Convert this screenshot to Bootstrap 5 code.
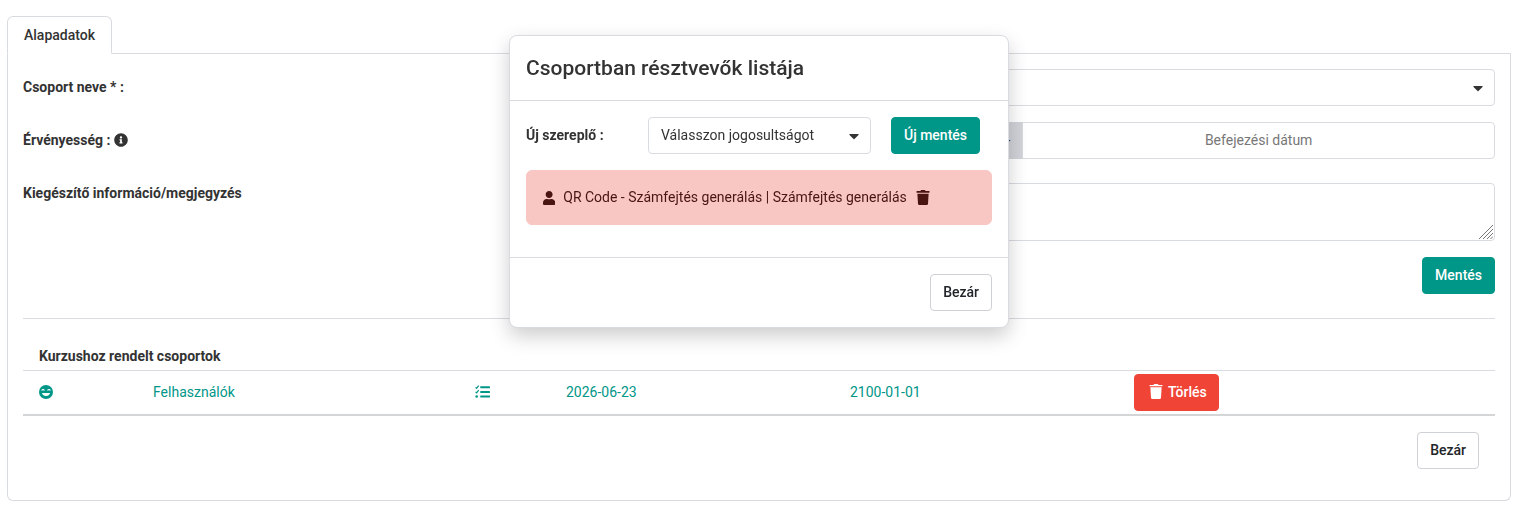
<!DOCTYPE html>
<html lang="hu">
<head>
<meta charset="utf-8">
<title>Csoport</title>
<link href="https://cdn.jsdelivr.net/npm/bootstrap@5.3.0/dist/css/bootstrap.min.css" rel="stylesheet">
<style>
:root { --line: #d8dce1; --teal: #009688; --ink: #333; }
html, body { height: 516px; overflow: hidden; }
body { font-family: Roboto, "Liberation Sans", sans-serif; font-size: 14px; color: var(--ink); background: #fff; }
.page-wrap { padding: 16px 6px 0 7px; }
.nav-tabs { --bs-nav-tabs-border-color: var(--line); --bs-nav-tabs-link-active-border-color: var(--line) var(--line) #fff; --bs-nav-tabs-border-radius: 6px; }
.nav-tabs .nav-link { padding: 8px 16px 7px; font-size: 14px; font-weight: 500; line-height: 21px; color: var(--ink); }
.nav-tabs .nav-link.active { color: var(--ink); }
.tab-box { border: 1px solid var(--line); border-top: 0; border-radius: 0 0 6px 6px; padding: 15px 15px 31px; height: 447px; }
.field-label { font-weight: 700; padding-top: 8px; padding-bottom: 8px; font-size: 14px; line-height: 21px; }
.form-control, .form-select, .input-group-text, .btn { font-size: 14px; line-height: 21px; padding-top: 7px; padding-bottom: 7px; border-radius: 4px; }
.form-control, .form-select { border-color: var(--line); color: var(--ink); }
.form-control::placeholder { color: #777; }
.form-select {
  padding-right: 36px;
  background-image: url("data:image/svg+xml,%3Csvg xmlns='http://www.w3.org/2000/svg' viewBox='0 0 320 512'%3E%3Cpath fill='%23333' d='M31 192h258c18 0 27 22 14 34L174 355c-8 8-20 8-28 0L17 226c-13-12-4-34 14-34z'/%3E%3C/svg%3E");
  background-size: 10px 16px;
  background-position: right 11px center;
}
.input-group-text { background: #d1d3d9; border-color: #d1d3d9; color: var(--ink); }
.note-area {
  height: 58px;
  resize: none;
  background-image: url("data:image/svg+xml,%3Csvg xmlns='http://www.w3.org/2000/svg' viewBox='0 0 14 14'%3E%3Cpath d='M0 14L14 0M4 14L14 4M8 14l6-6M11.500 14l2.500-2.500' stroke='%23777' stroke-width='1' fill='none'/%3E%3C/svg%3E");
  background-repeat: no-repeat;
  background-size: 14px 14px;
  background-position: right 1px bottom 1px;
}
.btn-teal { background: var(--teal); border-color: var(--teal); color: #fff; font-weight: 500; }
.btn-teal:hover { background: #00897b; border-color: #00897b; color: #fff; }
.btn-close-soft { background: #fff; border: 1px solid #ced1d6; color: #212529; font-weight: 500; }
.btn-red { background: #ef4436; border-color: #ef4436; color: #fff; font-weight: 500; padding-left: 14px; padding-right: 11px; vertical-align: middle; }
.btn-red:hover { background: #e53935; border-color: #e53935; color: #fff; }
.btn-red .ico { margin-right: 5px; }
.sep { margin: 24px 0; border-top: 1px solid var(--line); opacity: 1; }
.group-table { table-layout: fixed; width: 100%; margin: 0; --bs-table-color: var(--teal); --bs-table-border-color: var(--line); }
.group-table th { padding: 3px 16px 3px; font-weight: 700; color: var(--ink); border-bottom: 1px solid var(--line); line-height: 21px; }
.group-table td { padding: 3px 16px; color: var(--teal); vertical-align: middle; border-bottom: 2px solid #d4d5d7; height: 43px; line-height: 21px; }
.c1 { width: 114px; } .c2 { width: 322px; } .c3 { width: 91px; } .c4 { width: 284px; }
.group-table td.first-cell { padding-right: 0; }
.ico { display: inline-block; vertical-align: -2px; fill: currentColor; }
.modal-dialog { margin: 35px auto 0 509px; }
.modal-content { --bs-modal-border-color: var(--line); border: 1px solid var(--line); border-radius: 8px; box-shadow: 0 8px 20px rgba(0,0,0,.2); color: var(--ink); }
.modal-header { padding: 16px; border-bottom: 1px solid var(--line); border-radius: 0; height: 65px; }
.modal-title { font-size: 21px; font-weight: 500; line-height: 32px; color: var(--ink); }
.modal-body { padding: 16px; }
.modal-footer { padding: 16px; border-top: 1px solid var(--line); }
.modal-footer > .btn { margin: 0; }
.actor-label { width: 122px; font-weight: 700; flex: none; }
.actor-select { width: 223px; flex: none; }
.actor-row { margin-bottom: 16px; }
.actor-row .btn { margin-left: 20px; }
.role-alert { background: #f8c7c3; border: 1px solid #f8c7c3; border-radius: 6px; color: #4a1410; padding: 16px; margin: 0 0 16px; line-height: 21px; height: 55px; }
.role-alert .ico-user { margin-right: 8px; }
.role-alert .ico-trash { margin-left: 9.500px; }
</style>
</head>
<body>
<div class="page-wrap">
  <ul class="nav nav-tabs">
    <li class="nav-item"><a class="nav-link active" href="#">Alapadatok</a></li>
  </ul>
  <div class="tab-box">
    <div class="row mb-3">
      <label class="col-4 field-label">Csoport neve * :</label>
      <div class="col-8"><select class="form-select"><option></option></select></div>
    </div>
    <div class="row mb-4">
      <label class="col-4 field-label">Érvényesség :
        <svg class="ico" width="14" height="14" viewBox="0 0 512 512"><path d="M256 8C119 8 8 119.043 8 256c0 136.997 111 248 248 248s248-111.003 248-248C504 119.043 393 8 256 8zm0 110c23.196 0 42 18.804 42 42s-18.804 42-42 42-42-18.804-42-42 18.804-42 42-42zm56 254c0 6.627-5.373 12-12 12h-88c-6.627 0-12-5.373-12-12v-24c0-6.627 5.373-12 12-12h12v-64h-12c-6.627 0-12-5.373-12-12v-24c0-6.627 5.373-12 12-12h64c6.627 0 12 5.373 12 12v100h12c6.627 0 12 5.373 12 12v24z"/></svg>
      </label>
      <div class="col-8">
        <div class="input-group">
          <input type="text" class="form-control text-center" placeholder="Kezdési dátum">
          <span class="input-group-text">-</span>
          <input type="text" class="form-control text-center" placeholder="Befejezési dátum">
        </div>
      </div>
    </div>
    <div class="row mb-3">
      <label class="col-4 field-label pt-0">Kiegészítő információ/megjegyzés</label>
      <div class="col-8"><textarea class="form-control note-area"></textarea></div>
    </div>
    <div class="d-flex justify-content-end">
      <button type="button" class="btn btn-teal">Mentés</button>
    </div>
    <hr class="sep">
    <table class="table group-table">
      <colgroup><col class="c1"><col class="c2"><col class="c3"><col class="c4"><col class="c4"><col></colgroup>
      <thead><tr><th colspan="6">Kurzushoz rendelt csoportok</th></tr></thead>
      <tbody>
        <tr>
          <td class="first-cell">
            <svg class="ico" width="14" height="14" viewBox="0 0 14 14"><circle cx="7" cy="7" r="7"/><path d="M2.800 5.600c.3-1.400 2.200-1.400 2.500 0M8.700 5.600c.3-1.400 2.200-1.400 2.500 0" fill="none" stroke="#fff" stroke-width="1.100"/><path d="M3 8h8c-.4 1.900-2 3-4 3s-3.600-1.100-4-3z" fill="#fff"/></svg>
          </td>
          <td>Felhasználók</td>
          <td>
            <svg class="ico" width="15" height="14" viewBox="0 0 15 14"><path d="M.6 2.300l1 1L3.700.6M.6 6.800l1 1 2.100-2.700" fill="none" stroke="currentColor" stroke-width="1.200"/><circle cx="1.700" cy="11.500" r="1.300"/><rect x="5.200" y="1.300" width="9.800" height="1.900" rx=".4"/><rect x="5.200" y="6" width="9.800" height="1.900" rx=".4"/><rect x="5.200" y="10.600" width="9.800" height="1.900" rx=".4"/></svg>
          </td>
          <td>2026-06-23</td>
          <td>2100-01-01</td>
          <td>
            <button type="button" class="btn btn-red">
              <svg class="ico" width="14" height="15" viewBox="0 0 448 512"><path d="M432 32H312l-9.400-18.700A24 24 0 0 0 281.100 0H166.800a23.720 23.720 0 0 0-21.400 13.300L136 32H16A16 16 0 0 0 0 48v16a16 16 0 0 0 16 16h416a16 16 0 0 0 16-16V48a16 16 0 0 0-16-16zM53.200 467a48 48 0 0 0 47.900 45h245.800a48 48 0 0 0 47.900-45L416 112H32z"/></svg>Törlés
            </button>
          </td>
        </tr>
      </tbody>
    </table>
    <div class="d-flex justify-content-end mt-3 pe-3">
      <button type="button" class="btn btn-close-soft">Bezár</button>
    </div>
  </div>
</div>

<div class="modal d-block" tabindex="-1">
  <div class="modal-dialog">
    <div class="modal-content">
      <div class="modal-header">
        <h5 class="modal-title">Csoportban résztvevők listája</h5>
      </div>
      <div class="modal-body">
        <div class="d-flex align-items-center actor-row">
          <div class="actor-label">Új szereplő :</div>
          <select class="form-select actor-select"><option>Válasszon jogosultságot</option></select>
          <button type="button" class="btn btn-teal">Új mentés</button>
        </div>
        <div class="alert role-alert d-flex align-items-center" role="alert">
          <svg class="ico ico-user" width="12.250" height="14" viewBox="0 0 448 512"><path d="M224 256c70.700 0 128-57.300 128-128S294.700 0 224 0 96 57.300 96 128s57.300 128 128 128zm89.600 32h-16.700c-22.200 10.200-46.900 16-72.900 16s-50.600-5.800-72.900-16h-16.700C60.200 288 0 348.200 0 422.400V464c0 26.500 21.500 48 48 48h352c26.500 0 48-21.500 48-48v-41.600c0-74.200-60.200-134.400-134.400-134.400z"/></svg>
          <span>QR Code - Számfejtés generálás | Számfejtés generálás</span>
          <svg class="ico ico-trash" width="14" height="15" viewBox="0 0 448 512"><path d="M432 32H312l-9.400-18.700A24 24 0 0 0 281.100 0H166.800a23.720 23.720 0 0 0-21.400 13.300L136 32H16A16 16 0 0 0 0 48v32a16 16 0 0 0 16 16h416a16 16 0 0 0 16-16V48a16 16 0 0 0-16-16zM53.200 467a48 48 0 0 0 47.900 45h245.800a48 48 0 0 0 47.900-45L416 128H32z"/></svg>
        </div>
      </div>
      <div class="modal-footer">
        <button type="button" class="btn btn-close-soft">Bezár</button>
      </div>
    </div>
  </div>
</div>
<script src="https://cdn.jsdelivr.net/npm/bootstrap@5.3.0/dist/js/bootstrap.bundle.min.js"></script>
</body>
</html>
